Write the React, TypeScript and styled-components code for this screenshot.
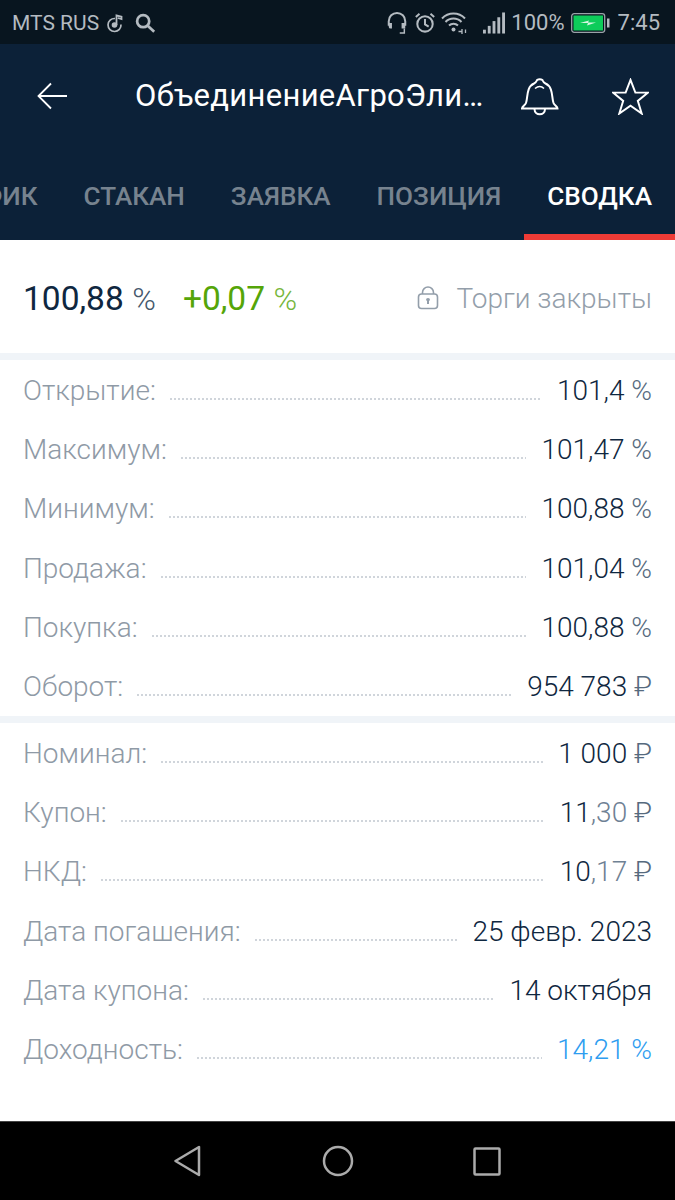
import React from "react";
import styled, { createGlobalStyle } from "styled-components";

const Global = createGlobalStyle`
  html, body { margin: 0; padding: 0; background: #fff; }
  * { box-sizing: border-box; }
  body { font-family: Roboto, "Liberation Sans", sans-serif; }
`;
const Screen = styled.div`
  width: 675px; height: 1200px; display: flex; flex-direction: column; overflow: hidden; background: #fff;
`;
const StatusBar = styled.div`
  height: 44px; flex: none; background: #08151f; color: #b4bbc1; display: flex; align-items: center;
  padding: 1px 15px 0 12px; font-size: 21px;
`;
const StatusSpacer = styled.div`flex: 1;`;
const StatusGroup = styled.div`display: flex; align-items: center; font-size: 22px;`;
const Header = styled.header`
  height: 196px; flex: none; background: #0c2138; display: flex; flex-direction: column;
`;
const TopRow = styled.div`
  height: 104px; flex: none; display: flex; align-items: center; padding: 0 26px 0 37px;
`;
const BackButton = styled.div`width: 98px; flex: none; display: flex; height: 30px;`;
const Title = styled.h1`
  margin: 0; width: 351px; flex: none; color: #fff; font-size: 31px; font-weight: 400; line-height: 38px;
  white-space: nowrap; overflow: hidden; text-overflow: ellipsis; letter-spacing: 0.3px;
`;
const IconButton = styled.div<{ $ml: number }>`
  margin-left: ${(p) => p.$ml}px; flex: none; display: flex;
`;
const Tabs = styled.nav`
  flex: 1; display: flex; justify-content: flex-end; overflow: hidden;
`;
const Tab = styled.div<{ $active?: boolean }>`
  flex: none; display: flex; align-items: center; padding: 10px 23px 0; height: 92px; font-size: 26.1px; font-weight: 500;
  color: ${(p) => (p.$active ? "#fff" : "#77838f")};
  border-bottom: 6px solid ${(p) => (p.$active ? "#ee3b36" : "transparent")};
`;
const Summary = styled.section`
  height: 113px; flex: none; display: flex; align-items: center; padding: 3px 23px 0 23px; font-size: 33.5px; font-weight: 400;
  color: #0f2740;
`;
const PriceUnit = styled.span<{ $color: string }>`
  font-weight: 300; font-size: 32px; margin-left: 8.5px; color: ${(p) => p.$color};
`;
const Change = styled.span`margin-left: 27px; color: #55a508;`;
const ChangeUnit = styled(PriceUnit)`opacity: 0.8;`;
const Closed = styled.div`
  margin-left: auto; display: flex; align-items: center; gap: 17px; color: #939eaa; font-size: 28px; font-weight: 300;
`;
const Divider = styled.div`height: 7px; flex: none; background: #f0f4f8;`;
const Group = styled.section`flex: none;`;
const Row = styled.div`
  height: 59.35px; display: flex; align-items: center; padding: 1px 23px 0; font-size: 28px; font-weight: 300;
`;
const Label = styled.span`color: #8f9aa6; flex: none;`;
const Dots = styled.span`
  flex: 1; height: 2px; margin: 17px 15px 0 14px;
  background-image: radial-gradient(circle at 1px 1px, #d0d5db 0.8px, transparent 1px);
  background-size: 4px 2px; background-repeat: repeat-x;
`;
const Value = styled.span<{ $blue?: boolean }>`
  flex: none; color: ${(p) => (p.$blue ? "#2e9df0" : "#0f2740")};
`;
const Fraction = styled.span`color: #6f8194;`;
const Unit = styled.span`color: #566a7e;`;
const Filler = styled.div`flex: 1;`;
const NavBar = styled.footer`
  height: 79px; flex: none; background: #000; border-top: 1px solid #444; display: flex; align-items: center;
  padding: 0 174px; justify-content: space-between;
`;

const Music = () => (
  <svg width="19" height="20" viewBox="0 0 19 20" fill="none" style={{ margin: "0 10px 0 6px" }}>
    <path d="M10 5.500a6.500 6.500 0 1 0 6 6" stroke="#b4bbc1" strokeWidth="1.700" />
    <circle cx="9.500" cy="12" r="2.800" fill="#b4bbc1" />
    <path d="M11.500 12V2.500l5 1.200V6l-3.600-1" stroke="#b4bbc1" strokeWidth="1.800" />
  </svg>
);
const Search = () => (
  <svg width="22" height="22" viewBox="0 0 24 24" fill="none" stroke="#b4bbc1" strokeWidth="3">
    <circle cx="10" cy="10" r="6.600" />
    <path d="M15 15l7 6.500" />
  </svg>
);
const Headset = () => (
  <svg width="22" height="24" viewBox="0 0 24 26" fill="none" stroke="#b4bbc1" strokeWidth="2.200" style={{ marginRight: 6 }}>
    <path d="M3 16v-5a9 9 0 0 1 18 0v5" />
    <path d="M3 13h3.500v6H5a2 2 0 0 1-2-2z" fill="#b4bbc1" stroke="none" />
    <path d="M17 13h4v6h-4z" fill="#b4bbc1" stroke="none" />
    <path d="M20 19v5h-5" strokeWidth="1.600" />
  </svg>
);
const Alarm = () => (
  <svg width="22" height="24" viewBox="0 0 24 24" fill="none" stroke="#b4bbc1" strokeWidth="2.200" style={{ marginRight: 5 }}>
    <circle cx="12" cy="13" r="8.400" />
    <path d="M12 7.500v6l4 2.500M2 5.500l4-3.500M22 5.500l-4-3.500" />
  </svg>
);
const Wifi = () => (
  <svg width="26" height="24" viewBox="0 0 26 24" fill="none" stroke="#b4bbc1" strokeWidth="2" style={{ marginRight: 16 }}>
    <path d="M1 7.500a16 16 0 0 1 23 0M4.500 11a11 11 0 0 1 16 0M8 14.500a6.500 6.500 0 0 1 9 0" />
    <circle cx="12.500" cy="18.500" r="2" fill="#b4bbc1" stroke="none" />
    <path d="M17.500 20.500h4M21 18v5M24.500 18.500v3.500" strokeWidth="1.300" />
  </svg>
);
const Signal = () => (
  <svg width="22" height="24" viewBox="0 0 23 24" fill="#b4bbc1" style={{ marginRight: 6 }}>
    <rect x="0" y="19" width="3" height="4" />
    <rect x="5" y="15" width="3" height="8" />
    <rect x="10" y="10" width="3" height="13" />
    <rect x="15" y="6" width="3" height="17" />
    <rect x="20" y="1" width="3" height="22" />
  </svg>
);
const Battery = () => (
  <svg width="39" height="20" viewBox="0 0 39 20" style={{ margin: "0 8px 0 6px" }}>
    <rect x="0.700" y="0.700" width="33" height="18.600" rx="2.500" fill="#08151f" stroke="#9aa2a8" strokeWidth="1.300" />
    <rect x="2.500" y="2.500" width="29.500" height="15" fill="#0dcc5a" />
    <rect x="36" y="5.500" width="2.500" height="9" fill="#b4bbc1" />
    <path d="M9 10l9-2.500-1 2h8l-9 3 1-2.500z" fill="#d5f5e2" />
  </svg>
);
const Back = () => (
  <svg width="30" height="30" viewBox="0 0 30 30" fill="none" stroke="#fff" strokeWidth="1.800">
    <path d="M30 15H2M14 2.500 1.500 15 14 27.500" />
  </svg>
);
const Bell = () => (
  <svg width="40" height="40" viewBox="0 0 40 40" fill="none" stroke="#fff" strokeWidth="2" style={{ marginLeft: -1 }}>
    <path d="M2 32.500c0-2 3-3 4-5.500 2-5 0-16 8-19.500 1-.5 2-1 2.500-2.500.5-2.500 6-2.500 6.500 0 .5 1.500 1.500 2 2.500 2.500 8 3.500 6 14.500 8 19.500 1 2.500 4 3.500 4 5.500z" />
    <path d="M14.500 33c0 7 10.500 7 10.500 0" />
    <path d="M15 12.500c3-2.500 6.500-2.500 9 0" strokeWidth="1.500" />
  </svg>
);
const Star = () => (
  <svg width="37" height="37" viewBox="0 0 38 38" fill="none" stroke="#fff" strokeWidth="2" style={{ marginTop: 1 }}>
    <path d="M19 2l5 13h13L26.500 23.500l4 13L19 28.500 7.500 36.500l4-13L1 15h13z" strokeLinejoin="miter" />
  </svg>
);
const Lock = () => (
  <svg width="22" height="24" viewBox="0 0 22 24" fill="none" stroke="#939eaa" strokeWidth="1.600">
    <rect x="1.500" y="8" width="19" height="14.500" rx="3" />
    <path d="M5.500 8V6.500a5.500 5.500 0 0 1 11 0V8" />
    <path d="M9 14a2 2 0 1 1 4 0l-1 1v3h-2v-3z" fill="#939eaa" stroke="none" />
  </svg>
);
const NavBack = () => (
  <svg width="28" height="32" viewBox="0 0 28 32" fill="none" stroke="#ababab" strokeWidth="2.500" strokeLinejoin="round">
    <path d="M25 2v28L1.500 16z" />
  </svg>
);
const NavHome = () => (
  <svg width="32" height="32" viewBox="0 0 32 32" fill="none" stroke="#ababab" strokeWidth="2.500">
    <circle cx="16" cy="16" r="14" />
  </svg>
);
const NavRecent = () => (
  <svg width="28" height="29" viewBox="0 0 28 29" fill="none" stroke="#ababab" strokeWidth="2.500" strokeLinejoin="round">
    <rect x="1.500" y="1.500" width="25" height="26" rx="1" />
  </svg>
);

type RowData = { label: string; value: React.ReactNode; blue?: boolean };
const rub = <Unit> ₽</Unit>;
const pct = <Unit> %</Unit>;
const first: RowData[] = [
  { label: "Открытие:", value: <>101,4{pct}</> },
  { label: "Максимум:", value: <>101,47{pct}</> },
  { label: "Минимум:", value: <>100,88{pct}</> },
  { label: "Продажа:", value: <>101,04{pct}</> },
  { label: "Покупка:", value: <>100,88{pct}</> },
  { label: "Оборот:", value: <>954 783{rub}</> },
];
const second: RowData[] = [
  { label: "Номинал:", value: <>1 000{rub}</> },
  { label: "Купон:", value: <>11<Fraction>,30</Fraction>{rub}</> },
  { label: "НКД:", value: <>10<Fraction>,17</Fraction>{rub}</> },
  { label: "Дата погашения:", value: "25 февр. 2023" },
  { label: "Дата купона:", value: "14 октября" },
  { label: "Доходность:", value: "14,21 %", blue: true },
];
const renderRows = (rows: RowData[]) =>
  rows.map((r) => (
    <Row key={r.label}>
      <Label>{r.label}</Label>
      <Dots />
      <Value $blue={r.blue}>{r.value}</Value>
    </Row>
  ));

export default function App() {
  return (
    <Screen>
      <Global />
      <StatusBar>
        <span>MTS RUS</span>
        <Music />
        <Search />
        <StatusSpacer />
        <StatusGroup>
          <Headset />
          <Alarm />
          <Wifi />
          <Signal />
          <span>100%</span>
          <Battery />
          <span>7:45</span>
        </StatusGroup>
      </StatusBar>
      <Header>
        <TopRow>
          <BackButton><Back /></BackButton>
          <Title>ОбъединениеАгроЭлита</Title>
          <IconButton $ml={35}><Bell /></IconButton>
          <IconButton $ml={52}><Star /></IconButton>
        </TopRow>
        <Tabs>
          <Tab>ГРАФИК</Tab>
          <Tab>СТАКАН</Tab>
          <Tab>ЗАЯВКА</Tab>
          <Tab>ПОЗИЦИЯ</Tab>
          <Tab $active>СВОДКА</Tab>
        </Tabs>
      </Header>
      <Summary>
        <span>100,88<PriceUnit $color="#45586c">%</PriceUnit></span>
        <Change>+0,07<ChangeUnit $color="#55a508">%</ChangeUnit></Change>
        <Closed><Lock />Торги закрыты</Closed>
      </Summary>
      <Divider />
      <Group>{renderRows(first)}</Group>
      <Divider />
      <Group>{renderRows(second)}</Group>
      <Filler />
      <NavBar>
        <NavBack />
        <NavHome />
        <NavRecent />
      </NavBar>
    </Screen>
  );
}
